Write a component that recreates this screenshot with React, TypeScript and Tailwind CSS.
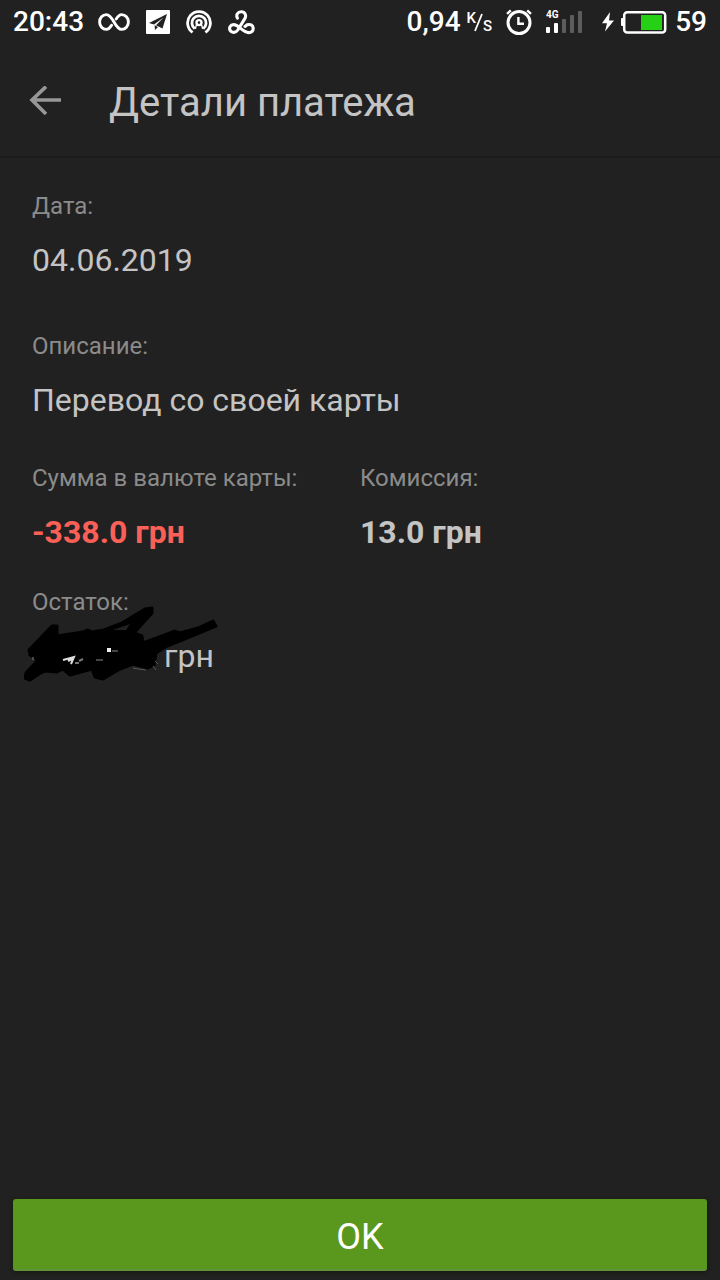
import type { ReactNode } from 'react';

function InfinityIcon() {
  return (
    <svg width="32" height="18" viewBox="0 0 32 18" fill="none" stroke="#fff" strokeWidth="2.9" strokeLinecap="round">
      <path d="M13.6 12.2C12 14.8 10.5 16.4 8.3 16.4C4.5 16.4 1.6 13.2 1.6 9S4.5 1.6 8.3 1.6C15.5 1.6 16.5 16.4 23.7 16.4C27.5 16.4 30.4 13.2 30.4 9S27.5 1.6 23.7 1.6C21.5 1.6 20 3.2 18.2 6" />
    </svg>
  );
}

function TelegramIcon() {
  return (
    <svg width="24" height="24" viewBox="0 0 24 24">
      <rect width="24" height="24" rx="1" fill="#fff" />
      <path d="M21 4L3 13L8 14.6L17.5 7.5L10 15.2L16.5 18.6Z" fill="#222" />
      <path d="M8.6 15.2L9 20L12 17Z" fill="#222" />
    </svg>
  );
}

function HotspotIcon() {
  return (
    <svg width="26" height="26" viewBox="0 0 26 26" fill="none" stroke="#fff" strokeWidth="2.8">
      <path d="M6.6 23.4A11.4 11.4 0 1 1 19.4 23.4" />
      <path d="M8.8 19.6A7.1 7.1 0 1 1 17.2 19.6" />
      <circle cx="13" cy="13.6" r="2.5" strokeWidth="2.4" />
      <path d="M10.4 15.6L9.4 19.8M15.6 15.6L16.6 19.8" strokeWidth="1.4" />
    </svg>
  );
}

function KnotIcon() {
  return (
    <svg width="27" height="25" viewBox="0 0 27 25" fill="none" stroke="#fff" strokeWidth="3.1" strokeLinecap="round" strokeLinejoin="round">
      <path d="M9.4 8.2C7.8 4.8 9.6 1.8 13.2 1.8C17.2 1.8 18.6 5.6 16.8 8.6L9.8 20C7.8 23 3.8 23.2 2.1 20.4C0.8 17.6 2.4 14.6 5.6 14.6C10.8 14.6 14.8 22.6 20.6 22.6C23.6 22.6 25.4 20.6 25.2 18.2C25 15 22 13.8 19.2 14.8L17 16.4" />
    </svg>
  );
}

function AlarmIcon() {
  return (
    <svg width="26" height="27" viewBox="0 0 26 27" fill="none" stroke="#fff">
      <circle cx="13" cy="13.6" r="11" strokeWidth="3" />
      <path d="M12.4 8V14.8H18" strokeWidth="2.4" />
      <path d="M1 4.8L4.8 1.4M25 4.8L21.2 1.4" strokeWidth="2.4" />
    </svg>
  );
}

function SignalIcon() {
  return (
    <svg width="37" height="26" viewBox="0 0 37 26">
      <text x="0" y="9" fill="#fff" fontSize="10" fontWeight="700" fontFamily="Roboto, sans-serif">4G</text>
      <rect x="0" y="18" width="4" height="6" rx="1" fill="#fff" />
      <rect x="8" y="14" width="4" height="10" rx="1" fill="#fff" />
      <rect x="16" y="10" width="4" height="14" rx="1" fill="#5c5c5c" />
      <rect x="24" y="6" width="4" height="18" rx="1" fill="#5c5c5c" />
      <rect x="32" y="2" width="4" height="22" rx="1" fill="#5c5c5c" />
    </svg>
  );
}

function BatteryIcon() {
  return (
    <svg width="66" height="24" viewBox="0 0 66 24">
      <path d="M9 2L1 13.2H6L4 21.6L13 10.4H8Z" fill="#fff" />
      <rect x="20" y="8" width="3" height="8" rx="1" fill="#fff" />
      <rect x="23.2" y="2.2" width="41" height="20.4" rx="3" fill="none" stroke="#fff" strokeWidth="2.5" />
      <rect x="40" y="5" width="21" height="15" fill="#25d015" />
    </svg>
  );
}

function StatusBar() {
  return (
    <div className="flex h-11 items-center justify-between px-[13px] text-[28px] font-medium text-white">
      <div className="flex items-center">
        <span>20:43</span>
        <div className="ml-3.5 flex items-center gap-4">
          <InfinityIcon />
          <TelegramIcon />
          <HotspotIcon />
          <KnotIcon />
        </div>
      </div>
      <div className="flex items-center">
        <span>0,94</span>
        <span className="ml-1.5 flex h-6 text-[15px] leading-4">
          <span>K</span>
          <svg width="9" height="24" viewBox="0 0 9 24" className="-ml-0.5" stroke="#fff" strokeWidth="1.8">
            <path d="M8 4L1 21" />
          </svg>
          <span className="self-end">S</span>
        </span>
        <div className="ml-3.5 flex items-center">
          <AlarmIcon />
          <span className="ml-3.5">
            <SignalIcon />
          </span>
          <span className="ml-[18px]">
            <BatteryIcon />
          </span>
        </div>
        <span className="ml-2">59</span>
      </div>
    </div>
  );
}

function Field({ label, children }: { label: string; children: ReactNode }) {
  return (
    <div>
      <dt className="text-2xl leading-8 text-[#8b8b8b]">{label}</dt>
      <dd className="mt-[18px] text-[32px] leading-10">{children}</dd>
    </div>
  );
}

// marker strokes that cover the balance
function Scribble() {
  return (
    <svg className="absolute -left-2 -top-8 max-w-none" width="196" height="80" viewBox="0 0 196 80" fill="none">
      <path
        d="M5 46L28 22L33 22L33 32L59 28L64 26L68 28L80 26L98 19L121 5L128 4L128 9L110 29L118 32L119 39L146 29L150 27L156 29L174 24L189 17L192 22L163 34L143 42L132 49L130 61L124 64L109 60L96 65L79 75L71 73L68 65L46 71L39 65L33 68L21 67L15 70L6 76L1 74L2 69L14 56L6 51Z"
        fill="#000"
        stroke="#000"
        strokeWidth="3"
        strokeLinejoin="round"
      />
      <path d="M89 26L106 20L102 26Z" fill="#212121" />
      <path d="M39 56L50 53L47 60M44 57L50 54" stroke="#ddd" strokeWidth="2" />
      <path d="M55 57L59 55M51 59L55 59" stroke="#777" strokeWidth="2" />
      <path d="M83 46L87 46" stroke="#eee" strokeWidth="4" />
      <path d="M88 47L94 47M72 56L79 56" stroke="#444" strokeWidth="2" />
      <path d="M9 53L9 56" stroke="#888" strokeWidth="1" />
      <path d="M109 64L114 65L122 66M129 62L132 66M131 57L134 60" stroke="#555" strokeWidth="1" />
    </svg>
  );
}

export default function App() {
  return (
    <div className="flex min-h-screen flex-col bg-[#212121] font-[Roboto,'Noto_Sans',sans-serif] text-[#c4c4c4]">
      <header className="border-b-2 border-[#1b1b1b] pb-6">
        <StatusBar />
        <div className="mt-[30px] flex items-center pl-[29px]">
          <button type="button" aria-label="Назад" className="text-[#979797]">
            <svg width="34" height="34" viewBox="0 0 34 34" fill="none" stroke="currentColor" strokeWidth="3.6">
              <path d="M32 14H4M17 0.6L3 14L17 28" />
            </svg>
          </button>
          <h1 className="ml-[46px] text-[40px] leading-[58px]">Детали платежа</h1>
        </div>
      </header>

      <main className="flex-1 px-8 pt-8">
        <dl>
          <Field label="Дата:">04.06.2019</Field>
          <div className="mt-[50px]">
            <Field label="Описание:">Перевод со своей карты</Field>
          </div>
          <div className="mt-[42px] grid grid-cols-2">
            <Field label="Сумма в валюте карты:">
              <span className="font-bold text-[#fb6058]">-338.0 грн</span>
            </Field>
            <Field label="Комиссия:">
              <span className="font-bold">13.0 грн</span>
            </Field>
          </div>
          <div className="mt-[34px]">
            <Field label="Остаток:">
              <span className="relative block pl-[132px]">
                грн
                <Scribble />
              </span>
            </Field>
          </div>
        </dl>
      </main>

      <footer className="px-[13px] pb-[9px]">
        <button type="button" className="h-[72px] w-full rounded-[3px] border-b-2 border-[#62933a] bg-[#59981c] pt-1.5 text-4xl text-white shadow-[0_1px_4px_#151a10]">
          OK
        </button>
      </footer>
    </div>
  );
}
